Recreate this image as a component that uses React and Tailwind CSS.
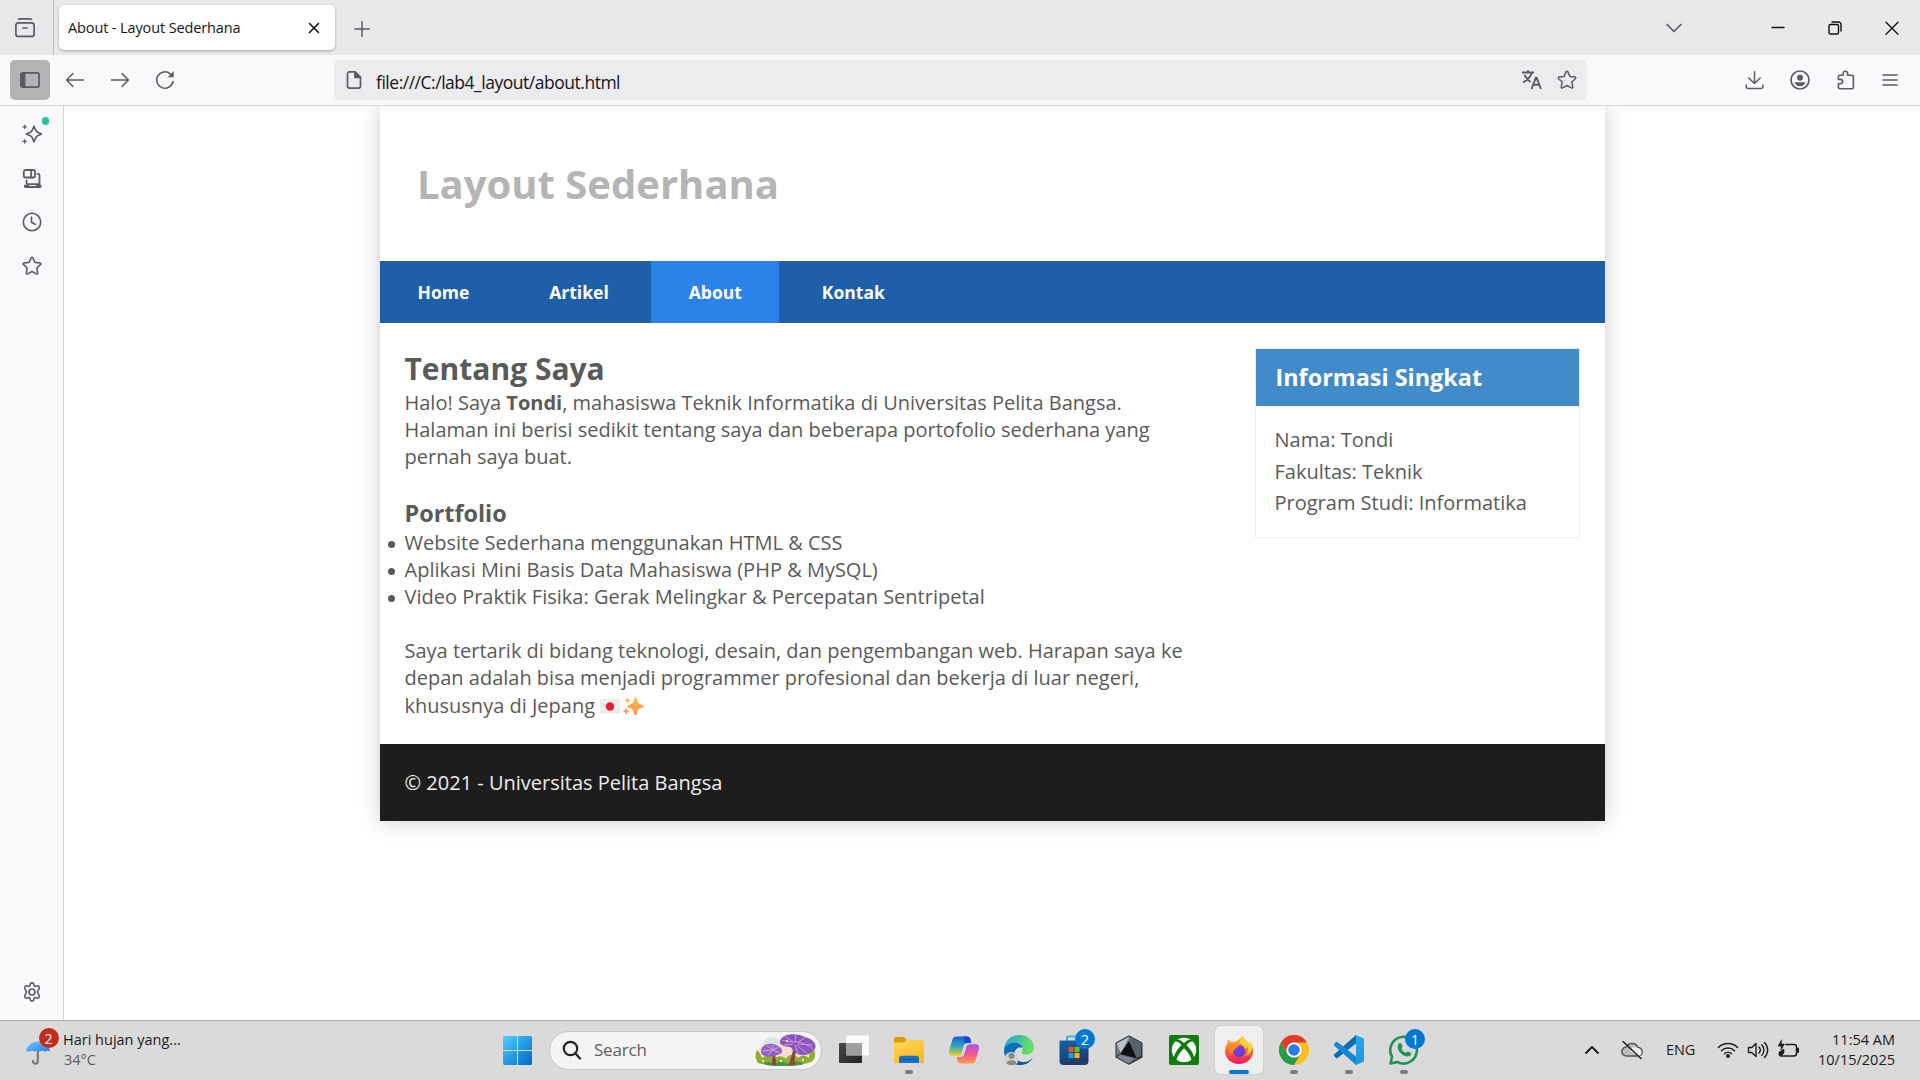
import React from "react";

function Icon({ size = 20, vb = 20, w = 1.5, className = "", children }) {
  return (
    <svg width={size} height={size} viewBox={`0 0 ${vb} ${vb}`} fill="none" stroke="currentColor" strokeWidth={w} strokeLinecap="round" strokeLinejoin="round" className={`shrink-0 ${className}`}>
      {children}
    </svg>
  );
}

const STAR = "M10 1.3c.4 0 .7.2.9.6l2 4.5 4.9.6c.9.1 1.2 1.1.6 1.7l-3.6 3.3 1 4.9c.2.8-.7 1.5-1.4 1L10 15.500 5.600 17.900c-.7.5-1.600-.2-1.400-1l1-4.900L1.600 8.700c-.6-.6-.3-1.600.6-1.700l4.900-.6 2-4.500c.2-.4.5-.6.9-.6z";

function TabStrip() {
  return (
    <div className="flex h-[55px] shrink-0 items-center bg-[#e9e9eb] text-[#5b5b66]">
      <div className="flex h-full w-[54px] items-center border-r border-[#b9b9be] pl-[15px]">
        <Icon w={1.7}>
          <rect x="0.9" y="4.800" width="18.200" height="13.600" rx="2.500" />
          <path d="M3.500 1.200C4.500.9 5.500.8 6.500.8h7c1 0 2 .1 3 .4M8 10h4" />
        </Icon>
      </div>
      <div className="ml-[5px] flex h-[45px] w-[276px] items-center justify-between rounded-[5px] bg-white pl-[9px] pr-[15px] shadow-[0_1px_3px_rgba(0,0,0,0.3)]">
        <span className="mt-[1px] whitespace-nowrap text-[14.500px] tracking-[-0.120px] text-[#15141a]">About - Layout Sederhana</span>
        <Icon size={12} vb={12} w={1.6} className="text-[#15141a]"><path d="M1.500 1.500l9 9M10.500 1.500l-9 9" /></Icon>
      </div>
      <Icon size={16} vb={16} className="ml-[19px] mt-[2px]"><path d="M8 .8v14.400M.8 8h14.400" /></Icon>
      <div className="ml-auto flex items-center pr-[21px]">
        <Icon size={16} vb={16} w={1.7} className="mr-[89px]"><path d="M1 4.500l7 7 7-7" /></Icon>
        <Icon size={14} vb={14} w={1.300} className="mr-[43px] text-[#111]"><path d="M1 6.500h12" /></Icon>
        <Icon size={14} vb={14} w={1.400} className="mr-[43px] text-[#111]">
          <rect x="1" y="3.500" width="9.500" height="9.500" rx="1.500" />
          <path d="M4 1h6.500a2.500 2.500 0 0 1 2.500 2.500V10" />
        </Icon>
        <Icon size={14} vb={14} w={1.300} className="text-[#111]"><path d="M1 1.200l12 12M13 1.200l-12 12" /></Icon>
      </div>
    </div>
  );
}

function Toolbar() {
  return (
    <div className="flex h-[51px] shrink-0 items-center border-b border-[#d8d8dc] bg-[#f9f9fb] text-[#5b5b66]">
      <div className="ml-[10px] flex h-10 w-10 items-center justify-center rounded-[5px] bg-[#b3b3b6]">
        <Icon w={1.700}>
          <rect x="0.9" y="2.900" width="18.200" height="14.200" rx="2" />
          <path d="M1 3h4.500v14H1z" fill="currentColor" stroke="none" />
        </Icon>
      </div>
      <Icon className="ml-[15px]"><path d="M18.500 10H1.500M8 3.500L1.500 10 8 16.500" /></Icon>
      <Icon className="ml-[25px]"><path d="M1.500 10h17M12 3.500l6.500 6.500-6.500 6.500" /></Icon>
      <Icon className="ml-[25px]">
        <path d="M18 11.500A8.200 8.200 0 1 1 15.500 4l2 1.800" />
        <path d="M18.700 1.200v5.500c0 .4-.3.6-.6.600h-5.400z" fill="currentColor" stroke="none" />
      </Icon>
      <div className="ml-[159px] flex h-10 w-[1253px] items-center rounded-[5px] bg-[#ececee] pl-[11px] pr-[10px]">
        <Icon w={1.700} size={18} vb={18}>
          <path d="M3.500.9h6.600l5.400 5.400v8.800a2 2 0 0 1-2 2H4.500a2 2 0 0 1-2-2V2.900a2 2 0 0 1 2-2z" />
          <path d="M10 1v5.500h5.500z" fill="currentColor" />
        </Icon>
        <span className="ml-[13px] mt-[4px] text-[17.500px] tracking-[-0.480px] text-[#15141a]">file:///C:/lab4_layout/about.html</span>
        <svg width="20" height="20" viewBox="0 0 20 20" fill="none" stroke="currentColor" strokeWidth="1.900" className="ml-auto">
          <path d="M0 2.500h12M6 .2v2.300M9.700 2.700C8.500 7 5.500 10 1 12.500M2.500 5C4 8 6.500 10.500 8.500 12M9.500 19l4.300-11.200h.8L19 19M11 14.800h6.400" />
        </svg>
        <Icon className="ml-[15px]"><path d={STAR} /></Icon>
      </div>
      <div className="ml-auto mr-[22px] flex items-center gap-[26px]">
        <Icon size={19} vb={19}><path d="M9.500.8v11.500M3.800 7l5.700 5.500L15.200 7M1.200 14v1.500a2 2 0 0 0 2 2h12.600a2 2 0 0 0 2-2V14" /></Icon>
        <Icon w={1.700}>
          <circle cx="10" cy="10" r="9" />
          <circle cx="10" cy="7.700" r="3" fill="currentColor" stroke="none" />
          <path d="M4.500 12.300h11c-1 2.500-3 3.900-5.500 3.900s-4.500-1.400-5.500-3.900z" fill="currentColor" stroke="none" />
        </Icon>
        <Icon w={1.600}>
          <path d="M7.200 5.200V3.400a2.200 2.200 0 0 1 4.400 0v1.800h4.300c.8 0 1.500.7 1.500 1.500v10.500c0 .8-.7 1.500-1.500 1.500h-12c-.8 0-1.500-.7-1.500-1.500v-3.400h2a2 2 0 0 0 0-4.400h-2V6.700c0-.8.7-1.500 1.500-1.500z" />
        </Icon>
        <Icon size={16} vb={16}><path d="M1 3h14M1 8h14M1 13h14" /></Icon>
      </div>
    </div>
  );
}

function Sidebar() {
  return (
    <aside className="flex w-[64px] shrink-0 flex-col items-center border-r border-[#d2d2d6] bg-[#f9f9fb] pt-[18px] text-[#5b5b66]">
      <div className="relative h-5 w-5">
        <Icon w={1.600}>
          <path d="M12 2.200l1.800 4.200c.4 1 .8 1.400 1.800 1.800l4 1.800-4 1.800c-1 .4-1.400.8-1.800 1.800L12 18l-1.800-4.400c-.4-1-.8-1.400-1.800-1.800L4.200 10l4.200-1.800c1-.4 1.400-.8 1.800-1.800z" />
          <path d="M2.700 1v3.600M.9 2.800h3.600M2.700 15.600v3.600M.9 17.400h3.600" strokeWidth="1.200" />
        </Icon>
        <span className="absolute -top-[7px] left-[20px] h-[8px] w-[7px] rounded-full bg-[#2ac3a2]" />
      </div>
      <Icon w={1.800} className="mt-[25px]">
        <rect x="1.800" y="1" width="11.200" height="7.500" rx="1.800" />
        <path d="M9.200 1v7.500M15.500 4.800h.7A1.300 1.300 0 0 1 17.500 6v8.500M4.500 11.500v2.300c0 1 .6 1.400 1.500 1.400h11.500" />
        <path d="M2 15.800h4.500l1 1.200h6l1-1.200h5v1.800a1.400 1.400 0 0 1-1.400 1.400H3.400A1.400 1.400 0 0 1 2 17.600z" fill="currentColor" stroke="none" />
      </Icon>
      <Icon className="mt-[23px]" w={1.600}><circle cx="10" cy="10" r="8.700" /><path d="M9.500 5v5.300l4 2.200" /></Icon>
      <Icon className="mt-[24px]" w={1.600}><path d={STAR} /></Icon>
      <Icon className="mb-[18px] mt-auto" w={1.600}>
        <circle cx="10" cy="10" r="3" />
        <path d="M8.500 1.500c.3-.8 2.700-.8 3 0l.6 2c.2.600.8 1 1.500.8l2-.6c.9-.2 2.200 1.800 1.700 2.600l-1.400 2.400c-.4.800-.4 1.800 0 2.600l1.400 2.400c.5.800-.8 2.800-1.700 2.600l-2-.6c-.7-.2-1.300.2-1.500.8l-.6 2c-.3.800-2.700.8-3 0l-.6-2c-.2-.6-.8-1-1.500-.8l-2 .6c-.9.2-2.200-1.800-1.700-2.600l1.400-2.400c.4-.8.4-1.800 0-2.600L2.700 6.300c-.5-.8.800-2.800 1.700-2.600l2 .6c.7.200 1.300-.2 1.500-.8z" />
      </Icon>
    </aside>
  );
}

function JapanFlag() {
  return (
    <svg width="20" height="15" viewBox="0 0 20 15" className="inline-block align-[-1px]">
      <rect width="20" height="15" rx="1.500" fill="#ededee" />
      <circle cx="10" cy="7.500" r="4.200" fill="#ee1c2e" />
    </svg>
  );
}

function Sparkles() {
  return (
    <svg width="21" height="19" viewBox="0 0 21 19" className="ml-[3px] inline-block align-[-3px]">
      <defs>
        <linearGradient id="spark" x1="0" y1="0" x2="0" y2="1"><stop offset="0" stopColor="#ffc53a" /><stop offset="1" stopColor="#ff8a58" /></linearGradient>
      </defs>
      <g fill="url(#spark)">
        <path d="M12.500.5c.9 0 1.200.8 1.500 2 .7 3 1.300 4.200 4.300 5.200 1.400.5 2.500.8 2.500 1.700s-1.100 1.200-2.500 1.700c-3 1-3.600 2.200-4.300 5.200-.3 1.200-.6 2-1.500 2s-1.200-.8-1.500-2c-.7-3-1.300-4.200-4.300-5.200-1.400-.5-2.200-.8-2.200-1.700s.8-1.200 2.200-1.700c3-1 3.600-2.200 4.300-5.200.3-1.200.6-2 1.500-2z" />
        <path d="M4.500.5c.6 0 .7 1.700 1 2s2 .5 2 1-1.700.7-2 1-.4 2-1 2-.7-1.700-1-2-2-.5-2-1 1.700-.7 2-1 .4-2 1-2zM3 11c.6 0 .8 1.800 1.100 2.100s2 .6 2 1.100-1.700.8-2 1.100-.5 2.200-1.100 2.200-.8-1.900-1.100-2.200-1.900-.6-1.900-1.100 1.600-.8 1.900-1.100S2.400 11 3 11z" />
      </g>
    </svg>
  );
}

function Page() {
  const link = "flex h-full items-center px-[37.500px]";
  return (
    <div className="ml-[316px] w-[1225px] bg-white font-['Open_Sans',sans-serif] text-[20px] leading-[27px] text-[#5a5a5a] shadow-[0_0_20px_#cccccc]">
      <header className="flex h-[155px] items-center pl-[37px]">
        <h1 className="text-[40px] font-bold leading-[54px] text-[#b5b5b5]">Layout Sederhana</h1>
      </header>
      <nav className="flex h-[62px] items-center gap-[5px] bg-[#1f5faa] text-[17.500px] font-bold text-white">
        <a className={link}>Home</a>
        <a className={link}>Artikel</a>
        <a className={`${link} bg-[#2b83ea]`}>About</a>
        <a className={link}>Kontak</a>
      </nav>
      <div className="flex justify-between pl-[24.500px] pr-[25px] pt-[25px]">
        <main className="w-[800px]">
          <h2 className="text-[30px] font-bold leading-[41px]">Tentang Saya</h2>
          <p>
            Halo! Saya <b>Tondi</b>, mahasiswa Teknik Informatika di Universitas Pelita Bangsa.<br />
            Halaman ini berisi sedikit tentang saya dan beberapa portofolio sederhana yang<br />
            pernah saya buat.
          </p>
          <h3 className="mt-[27px] text-[23.400px] font-bold leading-[32px]">Portfolio</h3>
          <ul>
            {[
              "Website Sederhana menggunakan HTML & CSS",
              "Aplikasi Mini Basis Data Mahasiswa (PHP & MySQL)",
              "Video Praktik Fisika: Gerak Melingkar & Percepatan Sentripetal",
            ].map((t) => (
              <li key={t} className="-ml-[17px] flex items-center gap-[10px]">
                <span className="mt-[3px] h-[7px] w-[7px] rounded-full bg-[#5a5a5a]" />
                {t}
              </li>
            ))}
          </ul>
          <p className="mb-[25px] mt-[27px]">
            Saya tertarik di bidang teknologi, desain, dan pengembangan web. Harapan saya ke<br />
            depan adalah bisa menjadi programmer profesional dan bekerja di luar negeri,<br />
            <span className="block h-[28px] leading-[29px]">khususnya di Jepang <JapanFlag /><Sparkles /></span>
          </p>
        </main>
        <aside className="h-[190px] w-[325px] border border-[#eeeeee]">
          <h3 className="flex h-[57px] items-center bg-[#428bca] pl-[19.500px] text-[23.400px] font-bold text-white">Informasi Singkat</h3>
          <div className="pl-[18.500px] pt-[18px] leading-[31.500px]">
            <p>Nama: Tondi</p>
            <p>Fakultas: Teknik</p>
            <p>Program Studi: Informatika</p>
          </div>
        </aside>
      </div>
      <footer className="flex h-[77px] items-center bg-[#1d1d1d] pl-[24.500px] text-[#eeeeee]">© 2021 - Universitas Pelita Bangsa</footer>
    </div>
  );
}

function Art({ children, vb = "0 0 30 30" }) {
  return <svg width="30" height="30" viewBox={vb}>{children}</svg>;
}

function TaskbarApp({ children, running, active, badge }) {
  return (
    <div className="flex w-[55px] justify-center">
      <div className={`relative flex h-[48px] w-[48px] items-center justify-center rounded-[5px] ${active ? "bg-[#efefef] shadow-[0_0_1px_rgba(0,0,0,0.4)]" : ""}`}>
        {children}
        {badge && <span className="absolute top-[3px] left-[25px] flex h-[20px] w-[20px] items-center justify-center rounded-full bg-[#0078d4] text-[14px] text-white">{badge}</span>}
        {running && <span className="absolute bottom-0 left-[20px] h-[4px] w-[8px] rounded-full bg-[#7c7c7c]" />}
        {active && <span className="absolute bottom-0 left-[14px] h-[4px] w-[20px] rounded-full bg-[#0078d4]" />}
      </div>
    </div>
  );
}

function Gradients() {
  const g = (id, a, b, x2 = 1, y2 = 1, mid) => (
    <linearGradient id={id} x1="0" y1="0" x2={x2} y2={y2}>
      <stop offset="0" stopColor={a} />
      {mid && <stop offset=".5" stopColor={mid} />}
      <stop offset="1" stopColor={b} />
    </linearGradient>
  );
  return (
    <svg width="0" height="0" className="absolute">
      <defs>
        {g("win", "#4fd0ff", "#0067c8")}
        {g("umb", "#7cc4ff", "#1c83ee")}
        {g("folder", "#ffd95c", "#fcb825", 0.5, 1)}
        {g("copA", "#1b5ce0", "#f0d020", 0, 1, "#29a9b8")}
        {g("copB", "#a850f0", "#ff9a50", 0, 1, "#f2568b")}
        {g("edgeA", "#1ba0e0", "#68e060", 1, 0.3)}
        {g("edgeB", "#1672c4", "#0b4a8e")}
        {g("store", "#0f63ad", "#223a66", 0.3, 1)}
        {g("hex", "#9aa4ad", "#24282d", 1, 1)}
        {g("foxA", "#ffcb2f", "#f0146e", 0, 1, "#ff6a2a")}
        {g("foxB", "#a03cf0", "#4a3cc8")}
        {g("vs", "#2aa8f2", "#1e95e0", 0, 1)}
        {g("task", "#494949", "#202020")}
      </defs>
    </svg>
  );
}

function Mushrooms() {
  return (
    <svg width="62" height="32" viewBox="0 0 62 32">
      <path d="M3 22C1 17 5 12 8 10 9 4 17 1 22 5l6 1h22c10 3 11 15 9 21-8 6-48 6-52 0z" fill="#f7dfd0" />
      <path d="M10 8c2-5 9-6 13-2l3 5H9z" fill="#d5e3ea" />
      <path d="M3 29c-3-4-3-9-1-13 3 3 4 5 5 8 5-4 10-2 13 1 3-4 8-3 11 0 3-6 10-5 12-1 4-4 9-2 11 0 0-4 2-7 4-10 4 6 2 11-2 14-10 4-43 4-53 1z" fill="#8fae2e" />
      <path d="M8 30c5-4 8-1 12 0 4-3 8-3 12 0 6-4 11-3 17 0-9 3-33 3-41 0z" fill="#3f9350" />
      <path d="M38 10c1 8-3 15-4 21h6c-1-7 1-14 3-20z" fill="#8a4a32" />
      <path d="M17 16c1 5 0 10 0 15h4c0-6-1-10-1-15z" fill="#8a4a32" />
      <path d="M25 7c3-8 17-8 25-4 9 2 13 9 9 13-4 5-12 7-18 3-3-2-4-5-6-6-5 0-11-2-10-6z" fill="#8c55bb" />
      <path d="M27 6c10 4 17-2 31 9M38 8L30 2M40 8l1-7M42 9l9-6M43 10l15 1M42 11l9 8M40 11l3 8M38 10l-9 1" stroke="#c99be6" strokeWidth="1" fill="none" />
      <path d="M6 17c0-6 9-9 15-6 6 2 8 7 4 9-6 3-19 5-19-3z" fill="#9560c0" />
      <path d="M18 16l-10 1M18 16l-6-4M18 16l0-5M18 16l6-3M18 16l7 3M18 16l-5 5" stroke="#cda5e8" fill="none" />
      <g fill="#fff"><circle cx="8" cy="27" r="1" /><circle cx="26" cy="27" r="1" /><circle cx="48" cy="26" r="1" /><circle cx="32" cy="7" r="1" /></g>
    </svg>
  );
}

function Taskbar() {
  return (
    <div className="flex h-[60px] shrink-0 items-center border-t border-[#a9a9a9] bg-[#dadada] pb-[1px] text-[#1b1b1b]">
      <Gradients />
      <div className="flex w-[503px] items-center pl-[25px]">
        <div className="relative h-[40px] w-[38px]">
          <svg width="26" height="26" viewBox="0 0 26 26" className="absolute left-0 top-[10px]">
            <path d="M12.800 10v11c0 3.500-4.800 3.500-4.800 0" fill="none" stroke="#77706d" strokeWidth="2" strokeLinecap="round" />
            <path d="M1 11.500C2 5.500 7 1.500 13 1.500s11.500 4 12 10c-2-1.200-3.500-1-5 .3-2-1.300-4-1.300-5.500 0-2-1.300-3.500-1.300-5 0-2-1.300-3-1.300-4.500 0-1.500-1-2.500-1-4-.3z" fill="url(#umb)" />
          </svg>
          <span className="absolute -top-[2px] left-[13.500px] flex h-[20px] w-[20px] items-center justify-center rounded-full bg-[#c42b1c] text-[14px] text-white">2</span>
        </div>
        <div className="leading-[20px]">
          <div className="text-[14.500px]">Hari hujan yang...</div>
          <div className="ml-[1px] text-[14.500px] text-[#5b5b5b]">34°C</div>
        </div>
      </div>
      <svg width="29" height="29" viewBox="0 0 29 29"><path d="M1 0h13v14H0V1zM15 0h13l1 1v13H15zM0 15h14v14H1l-1-1zM15 15h14v13l-1 1H15z" fill="url(#win)" /></svg>
      <div className="ml-[17px] flex h-[39px] w-[273px] items-center rounded-full border border-[#c6c6c6] bg-[#f4f4f4] pl-[12px] pr-[4px]">
        <Icon size={20} w={2.200} className="text-[#222]"><circle cx="8.500" cy="8.500" r="6.700" /><path d="M13.500 13.500l4.500 5" /></Icon>
        <span className="ml-[12px] text-[17px] tracking-[-0.200px] text-[#606060]">Search</span>
        <div className="ml-auto"><Mushrooms /></div>
      </div>
      <div className="ml-[4.500px] flex">
        <TaskbarApp>
          <Art>
            <rect x="0" y="8" width="23" height="20" rx="1" fill="url(#task)" />
            <rect x="7" y="0.500" width="23" height="20" rx="1" fill="#fff" fillOpacity="0.850" />
            <path d="M7 8h16v12.500H7z" fill="#8a8a8a" fillOpacity="0.750" />
          </Art>
        </TaskbarApp>
        <TaskbarApp running>
          <Art>
            <path d="M0 4.500C0 3 .8 2 2 2h8l2.500 3v5H0z" fill="#dc9c0a" />
            <path d="M0 7.500h10L12.500 5H29c.6 0 1 .4 1 1v22H0z" fill="url(#folder)" />
            <path d="M5 28v-4.500c0-2 1-2.800 2.500-2.800h15c1.500 0 2.500.8 2.500 2.800V28z" fill="#1272c4" />
            <path d="M8.500 24.500h13" stroke="#0a4f94" strokeWidth="1" />
          </Art>
        </TaskbarApp>
        <TaskbarApp>
          <Art>
            <path d="M7 1.500h11c2 0 3 1 3.500 3l.8 3.500h-4c-2 0-3 1-3.600 3l-2 7c-.6 2-1.700 2.800-3.500 2.800H3c-2.500 0-3.600-2-2.800-5L3.300 5c.6-2.300 1.700-3.500 3.700-3.500z" fill="url(#copA)" />
            <path d="M14 1.500h4c2 0 3 1 3.500 3l.8 3.500h-4c-1 0-1.800.3-2.400.8z" fill="#1c47cf" />
            <path d="M23 28.500H12c-2 0-3-1-3.500-3l-.8-3.500h4c2 0 3-1 3.600-3l2-7c.6-2 1.700-2.800 3.500-2.800H27c2.500 0 3.600 2 2.800 5L26.700 25c-.6 2.300-1.700 3.500-3.700 3.500z" fill="url(#copB)" />
          </Art>
        </TaskbarApp>
        <TaskbarApp>
          <Art>
            <path d="M0 16C0 6 7 0 15.500 0 24 0 30 6 30 12.500c0 4-3 7-7 7-3.500 0-5.500-1-5.500-2 0-.8 1-1.500 1-3.500C18.500 10 15 7.500 11 7.500 5 7.500 1 11 0 16z" fill="url(#edgeA)" />
            <path d="M0 16c.5-5.500 5-8.500 11-8.500 4 0 7 2.500 7.500 5.500-6-2-9 3-8 8 .8 4 4.500 8 9 8.500C9 32 0 25 0 16z" fill="#0f6cbd" />
            <path d="M11 16c-2 6 2 10 7 11 4 .6 8-.8 11-4.500-2.500 5-8 7.500-13 7.500-4 0-8-6-7-10z" fill="url(#edgeB)" />
            <circle cx="7.500" cy="24" r="7" fill="#d4d2d0" />
            <circle cx="7.500" cy="21" r="3" fill="#8b8886" />
            <path d="M2.500 28.500c0-4.500 10-4.500 10 0-2 2-8 2-10 0z" fill="#8b8886" />
          </Art>
        </TaskbarApp>
        <TaskbarApp badge="2">
          <Art>
            <path d="M8 6V2.500C8 1.700 8.500 1.500 9 1.500h12c.6 0 1 .3 1 1V6" fill="none" stroke="#31b5f0" strokeWidth="2" />
            <path d="M.5 5.500h29V26a4 4 0 0 1-4 4h-21a4 4 0 0 1-4-4z" fill="url(#store)" />
            <path d="M9.500 12H14.500v5H9.500z" fill="#f25022" />
            <path d="M15.500 12h5v5h-5z" fill="#7fba00" />
            <path d="M9.500 18h5v5h-5z" fill="#12a4ef" />
            <path d="M15.500 18h5v5h-5z" fill="#ffb900" />
          </Art>
        </TaskbarApp>
        <TaskbarApp>
          <Art>
            <path d="M15 .8l13 7v14.500l-13 7-13-7V7.800z" fill="url(#hex)" />
            <path d="M15 1.500l12.300 6.700L27 20l-6 5z" fill="#59626b" />
            <path d="M15 2L3 8.500 7 19z" fill="#b7c2cb" />
            <path d="M15 6l7.500 17L6 19z" fill="#0e1013" />
            <path d="M15 .8l13 7v14.500l-13 7-13-7V7.800zM6 19l-4 3M22.500 22.500l5 0" fill="none" stroke="#2d3136" strokeWidth="1" />
            <path d="M6 20l15 3.500-6 5-11-6z" fill="#7d8790" />
          </Art>
        </TaskbarApp>
        <TaskbarApp>
          <Art>
            <rect width="30" height="30" rx="2" fill="#107c10" />
            <circle cx="15" cy="15" r="12.200" fill="#fff" />
            <path d="M7 4.500c3-.5 6 1.500 8 3.500 2-2 5-4 8-3.500l1 2c-2-.5-4.500 1-6.500 3.500 4 4 8 9.500 7.500 14l-2.500 1C21.500 20.500 18 16 15 13.200 12 16 8.500 20.500 7.500 25L5 24c-.5-4.500 3.500-10 7.500-14C10.500 7.500 8 6 6 6.500z" fill="#107c10" />
          </Art>
        </TaskbarApp>
        <TaskbarApp active>
          <Art>
            <path d="M18 1c1.500 1.500 3.500 3 4 5.500 1.500.5 2.500 1.500 3 2.800l.8-1.800C28 10 29 13 29 16c0 7.500-6 13-14 13S1 23 1 16c0-3 1-5.500 2.500-7.500L3.800 4l3 3c2-.8 3.500-.6 4.700 0C13 5 16.500 4 18 1z" fill="url(#foxA)" />
            <path d="M18 .800c0 4-3.500 6-2 8.200 3 0 5 2.500 5 5 2-1 2.500-2.500 2-4 2.500 4.500.5 9-2 11 4-1 7.800-5 7.500-10-.3-2-1.500-3.500-2.700-4.500l-.8 2C24 6 19.500 4.500 18 .8z" fill="#ffd23c" />
            <circle cx="15" cy="16" r="6" fill="url(#foxB)" />
            <path d="M5 10c3-2.500 5.500-1 6.500 0l4-.3c-.5 2-2.500 2.300-3.500 3.300 0 1.500-2 1.500-3 2.500 0 3-2 3.500-3.500 1.500z" fill="#ff8a24" />
          </Art>
        </TaskbarApp>
        <TaskbarApp running>
          <Art>
            <circle cx="15" cy="15" r="15" fill="#fcbf1e" />
            <path d="M2 7.500A15 15 0 0 1 28 7.500H15a7.500 7.500 0 0 0-6.500 11.250z" fill="#e33b2e" />
            <path d="M2 7.500L8.500 18.750A7.500 7.500 0 0 0 21.500 18.750L15 30A15 15 0 0 1 2 7.500z" fill="#23a047" />
            <circle cx="15" cy="15" r="7.500" fill="#fff" />
            <circle cx="15" cy="15" r="5.800" fill="#2f7bea" />
          </Art>
        </TaskbarApp>
        <TaskbarApp running>
          <Art>
            <path d="M22 0L0 19.500c-.4.400-.4 1 0 1.500l2 2c.4.400 1 .4 1.500 0L22 8.500z" fill="#0a6db3" />
            <path d="M22 30L0 10.500c-.4-.4-.4-1 0-1.500l2-2c.4-.4 1-.4 1.500 0L22 21.500z" fill="#1788d3" />
            <path d="M22 0l7 3c.6.3 1 .8 1 1.500v21c0 .7-.4 1.200-1 1.500l-7 3c-.5-.5 0-1 0-2V2c0-1-.5-1.500 0-2z" fill="url(#vs)" />
          </Art>
        </TaskbarApp>
        <TaskbarApp running badge="1">
          <Art>
            <path d="M1.500 28.500l1.500-6.800A13.300 13.300 0 1 1 8.300 26.900z" fill="none" stroke="#1f9255" strokeWidth="2.600" strokeLinejoin="round" />
            <path d="M9.500 9c1-1.500 2.500-1 3 0l1 2.300c.3.800-1.200 1.700-1 2.400.8 2 2.200 3.200 4.200 4 .8.200 1.500-1.500 2.400-1.200l2.400 1.200c1 .5.800 2-.2 2.800-3 2.500-7 .2-9.500-2.200C9.500 16 7.500 12 9.500 9z" fill="#1f9255" />
          </Art>
        </TaskbarApp>
      </div>
      <div className="ml-auto flex items-center pr-[25px]">
        <Icon size={14} vb={14} w={1.900}><path d="M1 10l6-6 6 6" /></Icon>
        <Icon size={22} vb={22} w={1.500} className="ml-[22px]">
          <path d="M5.500 17a4.500 4.500 0 0 1-.3-9A6.500 6.500 0 0 1 17 8.500a4.200 4.200 0 0 1 0 8.500z" fill="#bdbdbd" stroke="#555" />
          <path d="M9 12l3-4 5 1c5 2 4 8 0 8z" fill="#f0f0f0" stroke="none" />
          <path d="M2 2.500l18 17" />
        </Icon>
        <span className="ml-[23px] w-[29px] text-[14.500px] tracking-[-0.100px]">ENG</span>
        <Icon size={22} vb={22} w={1.500} className="ml-[22px]">
          <path d="M1.500 8.500a13.500 13.500 0 0 1 19 0M4.500 11.700a9.200 9.200 0 0 1 13 0M7.500 14.700a5 5 0 0 1 7 0" />
          <circle cx="11" cy="17" r="1.200" fill="currentColor" />
        </Icon>
        <Icon size={22} vb={22} w={1.400} className="ml-[8px]">
          <path d="M1.500 8.500v5h3.300l4.200 4V4.500l-4.200 4zM12 8a4.500 4.500 0 0 1 0 6M14.800 5.800a7.500 7.500 0 0 1 0 10.400M17.500 3.500a10.500 10.500 0 0 1 0 15" />
        </Icon>
        <Icon size={22} vb={22} w={1.500} className="ml-[8px]">
          <path d="M9 5.500h8a2.500 2.500 0 0 1 2.500 2.500v6.500A2.500 2.500 0 0 1 17 17H5a2.500 2.500 0 0 1-2.500-2.500" />
          <path d="M4.500 1L1 7h3v4l3.500-6H4.500zM2 16v-3l5-3v4l-3 3z" fill="currentColor" strokeWidth=".5" />
          <path d="M21 9.500v3.500" strokeWidth="2" />
        </Icon>
        <div className="ml-[18px] w-[78px] text-right text-[14.500px] leading-[20px]">
          <div className="whitespace-nowrap">11:54 AM</div>
          <div className="whitespace-nowrap">10/15/2025</div>
        </div>
      </div>
    </div>
  );
}

export default function App() {
  return (
    <div className="flex h-[1080px] w-[1920px] flex-col overflow-hidden bg-white font-['Open_Sans',sans-serif]">
      <TabStrip />
      <Toolbar />
      <div className="flex min-h-0 flex-1">
        <Sidebar />
        <div className="flex-1 overflow-hidden bg-white"><Page /></div>
      </div>
      <Taskbar />
    </div>
  );
}
